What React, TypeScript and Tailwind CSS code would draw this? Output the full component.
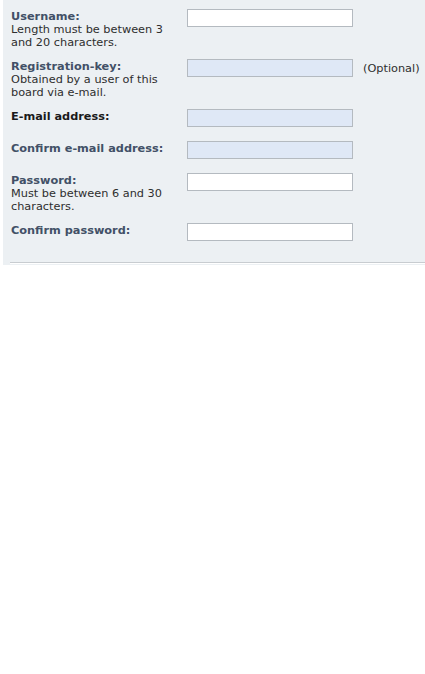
const rows = [
  { label: 'Username:', desc: ['Length must be between 3', 'and 20 characters.'], filled: false },
  { label: 'Registration-key:', desc: ['Obtained by a user of this', 'board via e-mail.'], filled: true, extra: '(Optional)' },
  { label: 'E-mail address:', desc: [], filled: true, dark: true },
  { label: 'Confirm e-mail address:', desc: [], filled: true },
  { label: 'Password:', desc: ['Must be between 6 and 30', 'characters.'], filled: false },
  { label: 'Confirm password:', desc: [], filled: false },
];

export default function App() {
  return (
    <div className="min-h-screen bg-white" style={{ fontFamily: '"DejaVu Sans", Verdana, sans-serif' }}>
      <div className="ml-[3px] bg-[#ECF0F3] pt-[9px]">
        <div className="flex flex-col gap-[10px] pl-[8px]">
          {rows.map((row) => (
            <div key={row.label} className="flex items-start min-h-[22px]">
              <div className="w-[176px] pt-px text-[11.3px] leading-[13px] text-[#2e2e2e]">
                <div className={row.dark ? 'font-bold text-[#1a1a1a]' : 'font-bold text-[#425067]'}>
                  {row.label}
                </div>
                {row.desc.map((line) => (
                  <div key={line}>{line}</div>
                ))}
              </div>
              <div className="flex items-center">
                <div
                  className={
                    row.filled
                      ? 'w-[166px] h-[18px] border border-[#B4BAC0] bg-[#DFE8F6]'
                      : 'w-[166px] h-[18px] border border-[#B4BAC0] bg-white'
                  }
                />
                {row.extra && (
                  <span className="ml-[10px] text-[11.3px] leading-[13px] text-[#2e2e2e]">{row.extra}</span>
                )}
              </div>
            </div>
          ))}
        </div>
        <div className="mt-[17px] ml-[7px] border-t border-[#C8CCD0]" />
        <div className="h-[1px] ml-[7px] bg-white" />
        <div className="h-[1px]" />
      </div>
    </div>
  );
}
